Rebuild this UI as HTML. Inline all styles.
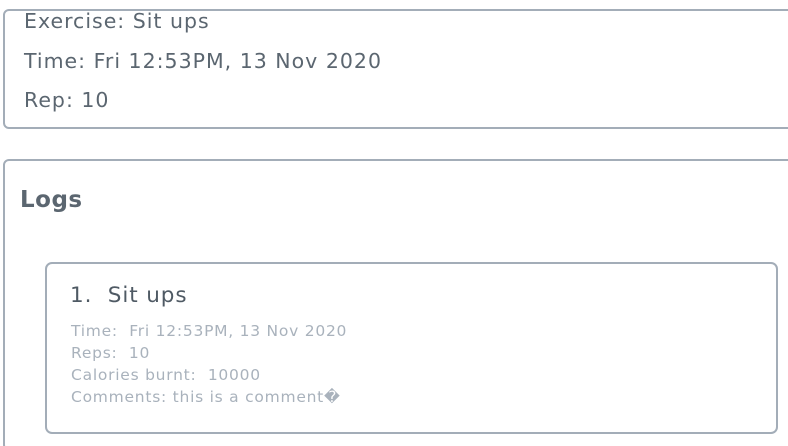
<!DOCTYPE html>
<html><head><style>
html,body{margin:0;width:788px;height:446px;overflow:hidden}
body{background:#fff;font-family:"DejaVu Sans","Liberation Sans",sans-serif;position:relative}
.b{position:absolute;border:2px solid #a3adb8;border-radius:6px;box-sizing:border-box}
.t{position:absolute;white-space:nowrap}
.d{color:#5b6670;font-size:20.5px;letter-spacing:1px;line-height:24px}
.l{color:#a9b2bc;font-size:15.5px;letter-spacing:0.75px;line-height:20px}
</style></head><body>
<div class="b" style="left:3px;top:9px;width:800px;height:120px"></div>
<div class="t d" style="left:24px;top:9px">Exercise: Sit ups</div>
<div class="t d" style="left:24px;top:49px">Time: Fri 12:53PM, 13 Nov 2020</div>
<div class="t d" style="left:24px;top:88px">Rep: 10</div>
<div class="b" style="left:3px;top:159px;width:800px;height:292px"></div>
<div class="t" style="left:20px;top:186px;font-size:23px;line-height:28px;letter-spacing:0.5px;font-weight:bold;color:#5b6670">Logs</div>
<div class="b" style="left:45px;top:262px;width:733px;height:172px;border-radius:7px"></div>
<div class="t" style="left:70px;top:282px;font-size:21.5px;line-height:28px;letter-spacing:0.9px;color:#4f5a64">1.&nbsp; Sit ups</div>
<div class="t l" style="left:71px;top:321px">Time:&nbsp; Fri 12:53PM, 13 Nov 2020</div>
<div class="t l" style="left:71px;top:343px">Reps:&nbsp; 10</div>
<div class="t l" style="left:71px;top:365px">Calories burnt:&nbsp; 10000</div>
<div class="t l" style="left:71px;top:387px">Comments: this is a comment&#xFFFD;</div>
</body></html>
